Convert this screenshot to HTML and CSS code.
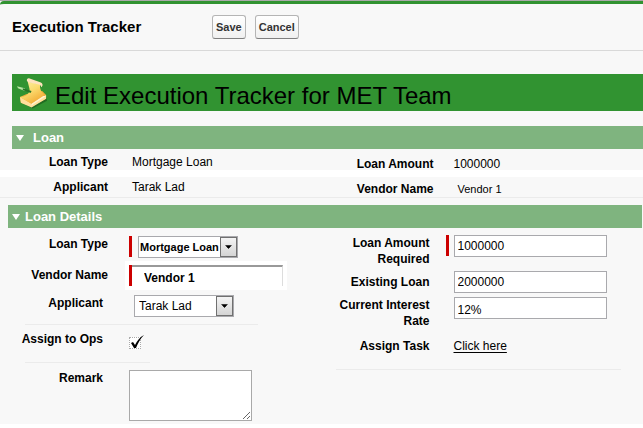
FILE: index.html
```html
<!DOCTYPE html>
<html lang="en">
<head>
<meta charset="utf-8">
<meta name="viewport" content="width=device-width, initial-scale=1">
<title>Execution Tracker</title>
<link rel="stylesheet" href="styles.css">
</head>
<body>
<form class="page">
  <header class="toolbar">
    <h1 class="toolbar-title">Execution Tracker</h1>
    <div class="actions">
      <button class="button" type="submit">Save</button>
      <button class="button" type="button">Cancel</button>
    </div>
  </header>
  <div class="banner">
    <svg class="banner-icon" viewBox="0 0 32 32" aria-hidden="true">
      <defs>
        <linearGradient id="paper" x1="0" y1="0" x2="0.6" y2="1">
          <stop offset="0" stop-color="#fff0a8"/>
          <stop offset="0.5" stop-color="#fbdc70"/>
          <stop offset="1" stop-color="#f3ac35"/>
        </linearGradient>
      </defs>
      <path d="M5 26 16 32 31 24 30 20 18 25Z" fill="#226b22"/>
      <path d="M3 20 10 17 26 14 30 18 30 22 15 30 4 26Z" fill="#f0ac3c"/>
      <path d="M3 20 15 27 30 18 30 22 15 31 4 26Z" fill="#ffdf9c"/>
      <path d="M3 20C9 20 13 17 13 12L11 4 24 7C23 11 25 15 28 18L15 27Z" fill="url(#paper)"/>
      <path d="M12 5C9 4 10 0 13 1L24 5C27 6 27 9 25 10 25 8 23 7 21 7Z" fill="#ffe3bd"/>
      <path d="M15 27 27 19 30 19 15 29Z" fill="#fff4cf"/>
      <path d="M0 9 8 11 8 14 1 11Z" fill="#b9e5a4"/>
      <path d="M6 11 15 14 14 16 6 13Z" fill="#2a7428"/>
    </svg>
    <h2 class="banner-title">Edit Execution Tracker for MET Team</h2>
  </div>

  <section>
    <h3 class="section-bar section-bar-inset"><span class="triangle"></span>Loan</h3>
    <dl class="summary">
      <div class="summary-item"><dt>Loan Type</dt><dd>Mortgage Loan</dd></div>
      <div class="summary-item"><dt>Loan Amount</dt><dd>1000000</dd></div>
    </dl>
    <dl class="summary summary-last">
      <div class="summary-item"><dt>Applicant</dt><dd>Tarak Lad</dd></div>
      <div class="summary-item"><dt>Vendor Name</dt><dd class="small">Vendor 1</dd></div>
    </dl>
  </section>

  <section>
    <h3 class="section-bar"><span class="triangle"></span>Loan Details</h3>
    <div class="details">
      <div class="column">
        <div class="row row-first">
          <label class="label" for="loan-type">Loan Type</label>
          <div class="field">
            <span class="required"></span>
            <span class="select-box">
              <select id="loan-type" class="select strong"><option>Mortgage Loan</option></select>
              <svg class="arrow" viewBox="0 0 17 18" aria-hidden="true"><path d="M5 7h7v1h-1v1h-1v1H9v1H8v-1H7V9H6V8H5z"/></svg>
            </span>
          </div>
        </div>
        <div class="row row-vendor">
          <label class="label" for="vendor">Vendor Name</label>
          <div class="field vendor-field">
            <span class="required"></span>
            <input id="vendor" class="vendor-input" type="text" value="Vendor 1">
          </div>
        </div>
        <div class="row row-applicant">
          <label class="label label-short" for="applicant">Applicant</label>
          <div class="field field-applicant">
            <span class="select-box">
              <select id="applicant" class="select"><option>Tarak Lad</option></select>
              <svg class="arrow" viewBox="0 0 17 18" aria-hidden="true"><path d="M5 7h7v1h-1v1h-1v1H9v1H8v-1H7V9H6V8H5z"/></svg>
            </span>
          </div>
        </div>
        <div class="row row-action">
          <label class="label label-short" for="assign-ops">Assign to Ops</label>
          <div class="field">
            <span class="check-box">
              <input id="assign-ops" class="check" type="checkbox" checked>
              <svg class="tick" viewBox="0 0 16 16" aria-hidden="true"><path d="M2 9 4 8 6 11C8 7 11 3 15 1 11 5 9 9 7 14L5 14Z"/></svg>
            </span>
          </div>
        </div>
        <div class="row row-remark">
          <label class="label label-short" for="remark">Remark</label>
          <div class="field"><textarea id="remark" class="remark"></textarea></div>
        </div>
      </div>

      <div class="column column-right">
        <div class="row row-wrapped">
          <label class="label" for="amount">Loan Amount Required</label>
          <div class="field">
            <span class="required"></span>
            <input id="amount" class="input" type="text" value="1000000">
          </div>
        </div>
        <div class="row row-existing">
          <label class="label" for="existing">Existing Loan</label>
          <div class="field field-plain"><input id="existing" class="input" type="text" value="2000000"></div>
        </div>
        <div class="row row-rate">
          <label class="label" for="rate">Current Interest Rate</label>
          <div class="field field-plain"><input id="rate" class="input" type="text" value="12%"></div>
        </div>
        <div class="row row-action">
          <span class="label">Assign Task</span>
          <div class="field field-plain"><a class="link" href="#">Click here</a></div>
        </div>
      </div>
    </div>
  </section>
</form>
</body>
</html>
```
FILE: styles.css
```css
* { box-sizing: border-box; }

body {
  margin: 0;
  background: #fff;
  color: #000;
  font: 12px/16px "Liberation Sans", Arial, sans-serif;
}

h1, h2, h3, dl, dd { margin: 0; }

input, select, textarea, button { font: inherit; color: inherit; margin: 0; }

.page {
  background: #f8f8f8;
  border-top: 1px solid #aaa;
}

.toolbar {
  display: flex;
  align-items: center;
  height: 50px;
  padding: 0 12px;
  border-top: 3px solid #319331;
  border-bottom: 1px solid #d9d9d9;
  border-top-left-radius: 4px;
}

.toolbar-title { width: 200px; font-size: 15px; line-height: 20px; }

.actions { display: flex; gap: 9px; }

.button {
  height: 24px;
  padding: 0 3px;
  border: 1px solid #b5b5b5;
  border-bottom-color: #7f7f7f;
  border-radius: 3px;
  background: linear-gradient(#fff, #f0f0f0);
  color: #333;
  font-size: 11px;
  font-weight: bold;
}

.banner {
  display: flex;
  align-items: center;
  gap: 7px;
  height: 37px;
  margin: 23px 0 15px 12px;
  padding: 0 5px;
  background: #319331;
}

.banner-icon { width: 31px; height: 32px; }

.banner-title {
  padding-top: 6px;
  font-size: 24px;
  font-weight: normal;
  line-height: 28px;
}

.section-bar {
  display: flex;
  align-items: center;
  gap: 5px;
  height: 23px;
  margin: 0 1px 0 8px;
  padding-left: 4px;
  background: #7fb47f;
  color: #fff;
  font-size: 13px;
}

.section-bar-inset { gap: 9px; margin: 0 0 0 12px; }

.triangle {
  border: 4px solid transparent;
  border-top: 6px solid #fff;
  border-bottom: 0;
}

.summary {
  display: grid;
  grid-template-columns: 1fr 1fr;
  height: 28px;
  padding-top: 5px;
  border-bottom: 7px solid #fff;
}

.summary-last {
  height: 21px;
  padding-top: 2px;
  margin-bottom: 7px;
  border-bottom: 1px solid #ebebeb;
}

.summary-item { display: flex; gap: 24px; }

.summary-item + .summary-item { gap: 20px; padding: 2px 0 0 4px; }

dt, .label {
  flex: none;
  width: 108px;
  font-weight: bold;
  text-align: right;
}

.small { padding-left: 4px; font-size: 11px; }

.details {
  display: grid;
  grid-template-columns: 1fr 1fr;
}

.row {
  display: flex;
  align-items: flex-start;
  gap: 21px;
}

.column-right .row { gap: 16px; }

.label-short { padding-right: 5px; }

.field { display: flex; gap: 6px; }

.column-right .field { gap: 5px; }

.column-right .field-plain { padding-left: 8px; }

.required { width: 3px; height: 21px; background: #c00; }

.row-first { height: 32px; padding-top: 8px; }

.row-vendor { align-items: center; height: 30px; }

.row-applicant { height: 35px; padding-top: 5px; }

.field-applicant { padding-left: 5px; }

.row-action { height: 38px; padding-top: 6px; }

.row-remark { padding: 7px 0 3px; }

.row-wrapped { padding-top: 7px; }

.row-existing { align-items: center; padding-top: 4px; }

.row-rate { padding: 4px 0 3px; }

.row-applicant, .row-action { position: relative; }

.row-applicant::after, .row-action::after {
  content: "";
  position: absolute;
  right: 64px;
  bottom: 0;
  left: 25px;
  height: 1px;
  background: #ebebeb;
}

.row-action::after { right: 172px; }

.column-right .row-action::after { right: 22px; left: 14px; }

.select-box { position: relative; width: 100px; height: 22px; }

.select {
  appearance: none;
  width: 100%;
  height: 100%;
  padding: 0 18px 0 4px;
  border: 1px solid #a9a9ad;
  border-radius: 0;
  background: #fff;
}

.strong { padding-left: 1px; font-size: 11px; font-weight: bold; }

.arrow {
  position: absolute;
  top: 1px;
  right: 1px;
  width: 17px;
  height: 20px;
  border: 1px solid #707070;
  background: linear-gradient(#f4f4f4, #d4d4d4);
  pointer-events: none;
}

.vendor-field {
  gap: 0;
  background: #fff;
  box-shadow: 0 0 0 4px #fff;
}

.vendor-input {
  width: 151px;
  height: 21px;
  padding: 4px 12px 0;
  border: 0;
  border-top: 2px solid #999;
  border-right: 1px solid #ddd;
  background: #fff;
  font-weight: bold;
}

.check-box { position: relative; width: 16px; height: 18px; padding-top: 6px; }

.check {
  display: block;
  appearance: none;
  width: 12px;
  height: 12px;
  border: 1px dotted #aaa;
  background: #fff;
}

.tick { position: absolute; top: 3px; left: 0; width: 16px; height: 16px; pointer-events: none; }

.remark {
  display: block;
  width: 123px;
  height: 51px;
  border: 1px solid #a9a9a9;
  background: #fff;
}

.input {
  width: 153px;
  height: 22px;
  padding: 0 3px;
  border: 1px solid #a9a9ad;
  background: #fff;
}

.row-rate .input { padding-top: 4px; }

.link { color: #000; text-underline-offset: 2px; }
```
